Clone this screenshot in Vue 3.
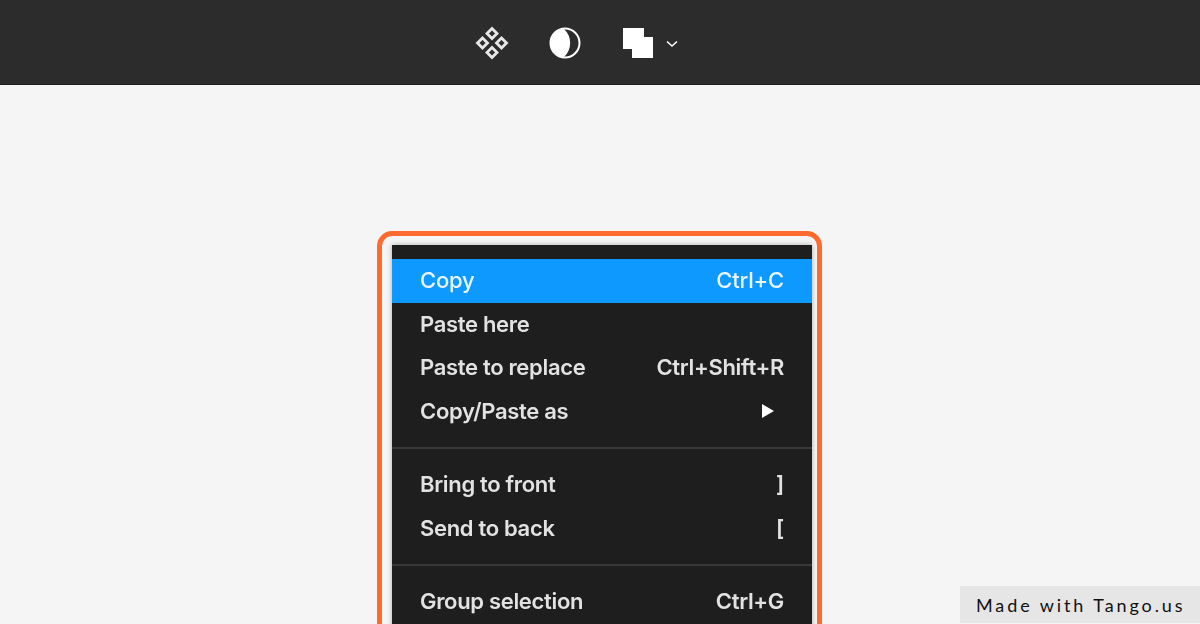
<script setup>
const groups = [
  [
    { label: 'Copy', key: 'Ctrl+C', active: true },
    { label: 'Paste here', key: '' },
    { label: 'Paste to replace', key: 'Ctrl+Shift+R' },
    { label: 'Copy/Paste as', arrow: true },
  ],
  [
    { label: 'Bring to front', key: ']' },
    { label: 'Send to back', key: '[' },
  ],
  [
    { label: 'Group selection', key: 'Ctrl+G' },
  ],
]
</script>

<template>
  <div class="page">
    <header class="bar">
      <svg class="ic comp" width="36" height="36" viewBox="0 0 36 36" fill="none" stroke="#e8e8e8" stroke-width="2.8">
        <path d="M18 3.5 L23 8.5 L18 13.5 L13 8.5 Z" />
        <path d="M18 22.5 L23 27.5 L18 32.5 L13 27.5 Z" />
        <path d="M8.5 13 L13.5 18 L8.5 23 L3.5 18 Z" />
        <path d="M27.5 13 L32.5 18 L27.5 23 L22.5 18 Z" />
      </svg>
      <svg class="ic mask" width="32" height="32" viewBox="0 0 32 32">
        <circle cx="16" cy="16" r="14.5" fill="none" stroke="#fff" stroke-width="2" />
        <path d="M15 2 A14 14 0 0 0 15 30 A19 19 0 0 0 15 2 Z" fill="#fff" />
      </svg>
      <svg class="ic boolean" width="32" height="32" viewBox="0 0 32 32">
        <path d="M1 1 H22 V10 H31 V31 H10 V22 H1 Z" fill="#fff" />
      </svg>
      <svg class="chev" width="12" height="8" viewBox="0 0 12 8" fill="none" stroke="#fff" stroke-width="1.6">
        <path d="M1 1.5 L6 6 L11 1.5" />
      </svg>
    </header>
    <main class="stage">
      <div class="ring">
        <div class="menu">
          <template v-for="(g, i) in groups" :key="i">
            <div v-if="i" class="sep"></div>
            <div v-for="it in g" :key="it.label" class="row" :class="{ active: it.active }">
              <span>{{ it.label }}</span>
              <svg v-if="it.arrow" class="arrow" width="12" height="14" viewBox="0 0 12 14"><path d="M0 0 L12 7 L0 14 Z" fill="#fff" /></svg>
              <span v-else>{{ it.key }}</span>
            </div>
          </template>
        </div>
      </div>
    </main>
    <div class="tango">Made with Tango.us</div>
  </div>
</template>

<style>
html, body { margin: 0; }
</style>

<style scoped>
.page {
  position: relative;
  width: 1200px;
  height: 624px;
  overflow: hidden;
  background: #f5f5f5;
  font-family: Inter, "Liberation Sans", sans-serif;
}
.bar {
  height: 85px;
  box-sizing: border-box;
  background: #2c2c2c;
  border-bottom: 1px solid #1e1e1e;
  display: flex;
  align-items: center;
  padding-left: 474px;
}
.ic, .chev { filter: blur(0.4px); margin-top: 1px; }
.comp { margin-right: 39px; }
.mask { margin-right: 41px; }
.boolean { margin-right: 12px; }
.chev { margin-top: 3px; }
.stage {
  display: flex;
  justify-content: center;
  padding-top: 146px;
}
.ring {
  width: 445px;
  box-sizing: border-box;
  height: 420px;
  margin-right: 1px;
  border: 5px solid #ff6b2e;
  border-radius: 15px;
  padding: 9px 5px 0 10px;
  flex: none;
  filter: blur(0.3px);
}
.menu {
  background: #1e1e1e;
  padding-top: 14px;
  height: 500px;
  box-shadow: 0 0 5px rgba(0, 0, 0, 0.3);
}
.row {
  height: 43.5px;
  box-sizing: border-box;
  display: flex;
  align-items: center;
  justify-content: space-between;
  padding: 0 28px 1px;
  font-size: 22px;
  font-weight: 600;
  letter-spacing: -0.32px;
  color: #e2e2e2;
  filter: blur(0.5px);
}
.row.active {
  background: #0d99ff;
  color: #eaf6ff;
  font-weight: 500;
  letter-spacing: -0.2px;
}
.arrow { margin-right: 10px; }
.sep {
  height: 2px;
  background: #383838;
  margin: 14px 0;
}
.tango {
  position: absolute;
  right: 0;
  bottom: 1px;
  width: 240px;
  height: 37px;
  box-sizing: border-box;
  background: #e6e6e6;
  color: #111;
  font-family: Lato, "Liberation Sans", sans-serif;
  font-size: 18px;
  letter-spacing: 2.9px;
  line-height: 38px;
  padding-left: 16px;
  white-space: nowrap;
}
</style>
